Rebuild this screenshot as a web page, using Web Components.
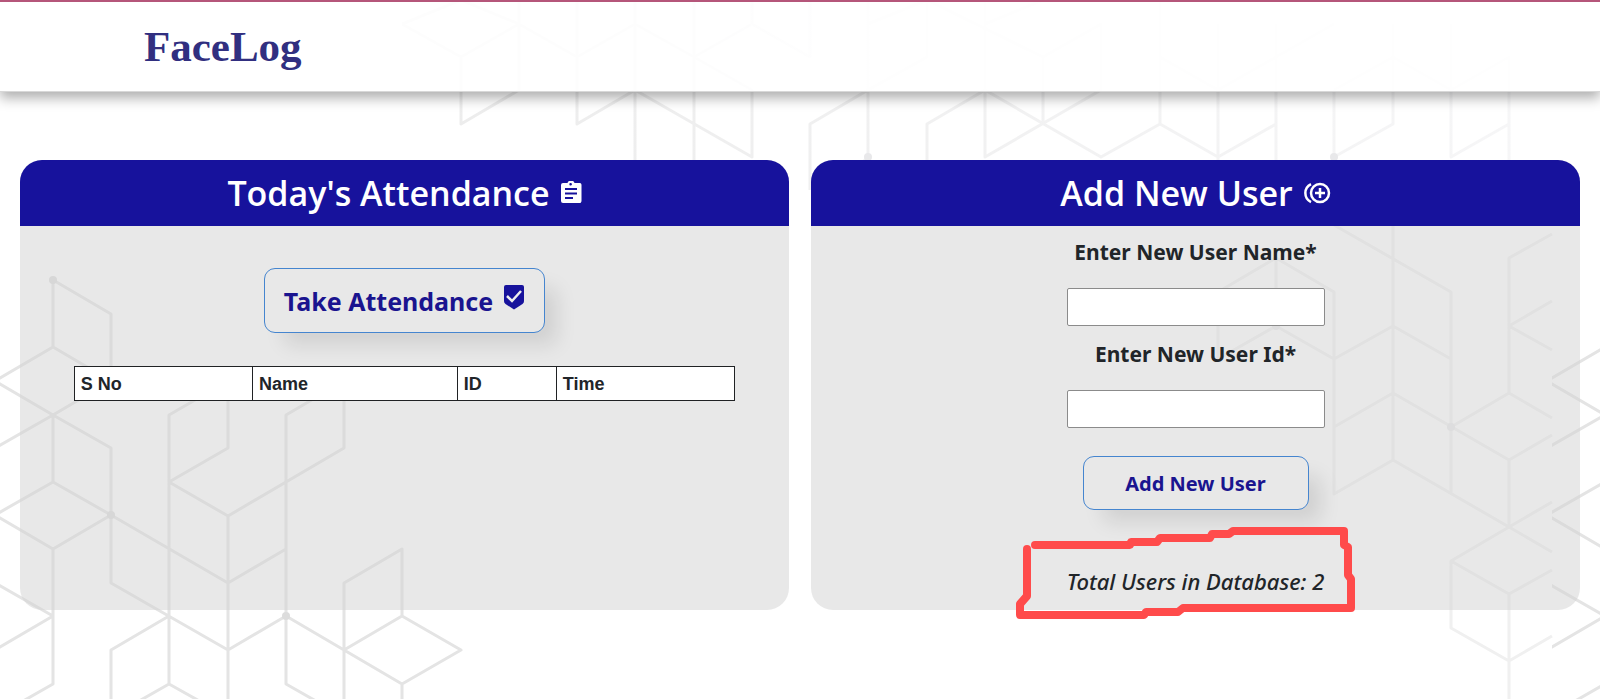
<!DOCTYPE html>
<html lang="en">
<head>
<meta charset="utf-8">
<title>FaceLog</title>
<style>
  html { height: 100%; }
  body { margin: 0; min-height: 100%; background: #fff; color: #212529; font-family: "Noto Sans", "Open Sans", sans-serif; }
</style>
</head>
<body>
<face-log-app></face-log-app>

<script>
const define = (name, html) => {
  const template = document.createElement('template');
  template.innerHTML = html;
  customElements.define(name, class extends HTMLElement {
    constructor() {
      super();
      this.attachShadow({ mode: 'open' }).append(template.content.cloneNode(true));
    }
  });
};

/* Line pattern behind the page; the left edge repeats after one 1552px tile */
define('hex-backdrop', `
<style>
  :host { position: absolute; inset: 0; z-index: -1; overflow: hidden; }
  svg { display: block; }
  g { fill: none; stroke-width: 3; stroke-linejoin: round; }
  .left { stroke: #e4e4e4; }
  .top { stroke: url(#fade); }
  .right { stroke: #f0f0f0; }
  .left circle { fill: #dcdcdc; stroke: none; }
  .top circle, .right circle { fill: #e8e8ea; stroke: none; }
</style>
<svg width="1600" height="699" viewBox="0 0 1600 699" aria-hidden="true">
  <defs>
    <linearGradient id="fade" gradientUnits="userSpaceOnUse" x1="400" y1="0" x2="1520" y2="0">
      <stop offset="0" stop-color="#ececec"/><stop offset="1" stop-color="#f6f6f7"/>
    </linearGradient>
    <clipPath id="tile"><rect x="0" y="0" width="1552" height="699"/></clipPath>
    <g id="cubes" class="left">
      <path d="M53 347V280L111 314V381M-5 381L53 347L111 381L53 415L-5 381M-5 448L53 415L111 448V583L228 650L286 616L402 684L461 650L402 616L344 650M53 415V482L-5 515L53 549L111 515L53 482M53 549V684L-5 717M-5 583L53 616L-5 650M111 515L228 583L286 549M169 684V415L228 381V448L169 482L228 516L344 448V381L286 415V684L344 717M228 516V699M169 616L111 650V699M111 717L169 684L228 717M344 699V583L402 549V616M402 684V699"/>
      <circle cx="53" cy="280" r="4"/><circle cx="111" cy="515" r="4"/><circle cx="286" cy="616" r="4"/>
    </g>
  </defs>
  <g clip-path="url(#tile)"><use href="#cubes"/></g>
  <svg x="1552" width="48" height="699"><use href="#cubes"/></svg>
  <g class="top">
    <path d="M402 24L461 57L519 24L577 57L635 24L694 57L752 24L810 57V0M402 24L461 0L519 24V90L461 124V57M577 0V124L635 90L752 157V90L694 57V165M519 0V24M635 0V165M694 0V57M752 0V24M810 190V124L868 90L927 57V0M868 0V157L860 165M868 24L927 0M927 165V124L985 90L1101 157L1160 124V0M985 0V157L1101 90V24L1043 57L927 0M985 24L1043 0M1043 57V124M1160 57L1218 90L1276 57L1334 24M1160 124L1218 157L1276 124M1218 24V165M1276 24V165M1334 90V157L1393 124V24M1334 90L1393 57L1451 90L1509 57V165M1451 24V157L1509 124"/>
    <circle cx="868" cy="157" r="4"/><circle cx="1334" cy="157" r="4"/>
  </g>
  <g class="right">
    <path d="M1334 225L1451 292V494M1393 225V460M1276 290V258L1218 292V359L1276 326L1334 359L1393 326L1451 359M1276 258L1334 292V494L1393 460L1509 527M1334 427L1393 393L1509 460L1552 435M1451 427L1509 393L1552 418M1509 393V258L1552 234M1552 301L1509 326L1552 350M1509 460V527L1552 502M1552 552L1509 527L1451 561V628L1509 661L1552 636M1451 561L1509 594L1552 570M1509 594V699"/>
    <circle cx="1451" cy="427" r="4"/><circle cx="1276" cy="326" r="4"/>
  </g>
</svg>`);

define('site-header', `
<style>
  :host { display: flex; box-sizing: border-box; height: 92px; align-items: center; padding: 0 9%;
    border-top: 2px solid #b5567a; border-bottom: 1px solid #d8d8d8;
    background: rgba(255,255,255,.88); box-shadow: 0 6px 12px rgba(0,0,0,.32); }
  a { color: #312f80; font: bold 43px/48px "Liberation Serif", serif; text-decoration: none; }
</style>
<a href="#"><slot></slot></a>`);

define('panel-card', `
<style>
  :host { display: flex; flex-direction: column; border-radius: 22px; background: rgba(209,209,209,.5); }
  header { display: flex; height: 66px; align-items: center; justify-content: center; gap: 10px; border-radius: 22px 22px 0 0; background: #17129c; color: #fff; }
  h2 { margin: 0; font-family: "Open Sans", sans-serif; font-size: 34px; line-height: 48px; font-weight: 600; }
  .body { display: flex; flex: 1; flex-direction: column; align-items: center; }
</style>
<header><h2><slot name="title"></slot></h2><slot name="icon"></slot></header>
<div class="body"><slot></slot></div>`);

define('action-button', `
<style>
  :host { display: block; }
  button { display: flex; box-sizing: border-box; align-items: center; justify-content: center; gap: 10px; margin: 0;
    width: var(--button-width); height: var(--button-height); padding: 0;
    border: 1px solid #4585cf; border-radius: 11px; background: #e8e8e8; color: #1a148f;
    font-family: inherit; font-weight: 700; font-size: var(--button-size);
    box-shadow: 16px 16px 20px -4px rgba(0,0,0,.1); }
</style>
<button type="button"><slot></slot></button>`);

define('attendance-panel', `
<style>
  :host { display: grid; }
  action-button { --button-width: 281px; --button-height: 65px; --button-size: 25px; margin: 42px 0 33px; }
  .badge { margin-bottom: 6px; }
  table { width: 86%; border-collapse: collapse; background: #fff; table-layout: fixed; font: bold 18px/24px "Liberation Sans", sans-serif; }
  th { height: 34px; box-sizing: border-box; padding: 0 6px; border: 1px solid #202224; text-align: left; }
  .no, .time { width: 27%; } .name { width: 31%; } .id { width: 15%; }
  svg { display: block; }
</style>
<panel-card>
  <span slot="title">Today's Attendance</span>
  <svg slot="icon" width="22" height="24" viewBox="0 0 22 24" aria-hidden="true">
    <path fill="#fff" fill-rule="evenodd" d="M3 2H7.500A3.700 3.700 0 0 1 14.500 2H19A2 2 0 0 1 21.500 4V20A2 2 0 0 1 19 22H3A2 2 0 0 1 1 20V4A2 2 0 0 1 3 2ZM11 2A1.300 1.300 0 1 0 11 4.500A1.300 1.300 0 0 0 11 2ZM5 7V9H17V7ZM5 11.500V13.500H17V11.500ZM5 16V18H13V16Z"/>
  </svg>
  <action-button>
    <span>Take Attendance</span>
    <svg class="badge" width="22" height="25" viewBox="0 0 22 25" aria-hidden="true">
      <path fill="#17129c" d="M3 0H19Q21 0 21 2V16Q21 18 19.500 19L11 24.500L2.500 19Q1 18 1 16V2Q1 0 3 0Z"/>
      <path fill="none" stroke="#eee" stroke-width="2.500" d="M4 11L9 16L18 6"/>
    </svg>
  </action-button>
  <table>
    <thead><tr><th class="no">S No</th><th class="name">Name</th><th class="id">ID</th><th class="time">Time</th></tr></thead>
  </table>
</panel-card>`);

define('text-field', `
<style>
  :host { display: flex; flex-direction: column; align-items: center; gap: 20px; }
  label { font-size: 21px; line-height: 32px; font-weight: 700; }
  input { box-sizing: border-box; width: 258px; height: 38px; margin: 0; padding: 0 8px; border: 1px solid #8b8b8b; border-radius: 2px; background: #fff; font: inherit; }
</style>
<label for="field"><slot></slot></label>
<input id="field" type="text">`);

define('user-total', `
<style>
  :host { display: block; position: relative; }
  p { margin: 0; font-size: 22px; line-height: 32px; font-style: italic; font-weight: 500; }
  svg { position: absolute; left: 50%; top: 50%; margin: -57px 0 0 -182px; }
</style>
<p><slot></slot></p>
<svg width="344" height="98" viewBox="1013 524 344 98" aria-hidden="true">
  <path fill="none" stroke="#ff4b4b" stroke-width="8" stroke-linecap="round" stroke-linejoin="round" d="M1035 545H1130L1131 542H1157L1160 538H1210L1212 534H1229L1233 531H1344V545L1348 547V575L1351 579V608H1183L1178 612H1146L1144 615H1020V604L1027 596V549"/>
</svg>`);

define('add-user-panel', `
<style>
  :host { display: grid; }
  form { display: flex; flex-direction: column; align-items: center; gap: 12px; padding: 10px 0 13px; }
  action-button { --button-width: 226px; --button-height: 54px; --button-size: 20px; margin: 16px 0 43px; }
  svg { display: block; }
</style>
<panel-card>
  <span slot="title">Add New User</span>
  <svg slot="icon" width="28" height="24" viewBox="0 0 28 24" fill="none" stroke="#fff" stroke-width="2.500" aria-hidden="true">
    <circle cx="17" cy="12" r="9"/><path d="M17 7V17M12 12H22M8 3A10 10 0 0 0 8 21"/>
  </svg>
  <form>
    <text-field>Enter New User Name*</text-field>
    <text-field>Enter New User Id*</text-field>
    <action-button>Add New User</action-button>
    <user-total>Total Users in Database: 2</user-total>
  </form>
</panel-card>`);

define('face-log-app', `
<style>
  :host { display: block; position: relative; z-index: 0; min-height: 100vh; overflow: hidden; }
  main { display: grid; grid-template-columns: 1fr 1fr; gap: 22px; padding: 68px 20px 80px; }
</style>
<hex-backdrop></hex-backdrop>
<site-header>FaceLog</site-header>
<main>
  <attendance-panel></attendance-panel>
  <add-user-panel></add-user-panel>
</main>`);
</script>
</body>
</html>
